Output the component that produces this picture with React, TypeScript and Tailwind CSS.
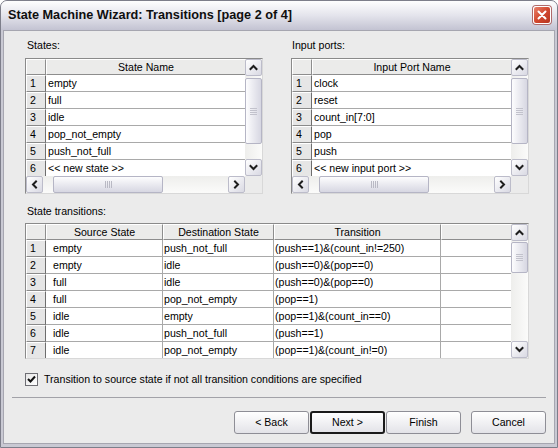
import React from "react";

type Dir = "up" | "down" | "left" | "right";

function Arrow({ dir }: { dir: Dir }) {
  const pts = {
    up: "1.5,6 4.5,3 7.5,6",
    down: "1.5,3 4.5,6 7.5,3",
    left: "6,1.5 3,4.5 6,7.5",
    right: "3,1.5 6,4.5 3,7.5",
  }[dir];
  return (
    <svg width="9" height="9" viewBox="0 0 9 9">
      <polyline points={pts} fill="none" stroke="#1e1e1e" strokeWidth="2" strokeLinecap="square" />
    </svg>
  );
}

function SBtn({ dir }: { dir: Dir }) {
  return (
    <div className="w-[17px] h-[17px] shrink-0 flex items-center justify-center rounded-[2px] border border-[#bcbcca] bg-gradient-to-br from-[#ffffff] to-[#d9d9e3]">
      <Arrow dir={dir} />
    </div>
  );
}

function VScroll({ thumb }: { thumb: string }) {
  return (
    <div className="w-[17px] shrink-0 flex flex-col bg-[#f4f4f2]">
      <SBtn dir="up" />
      <div className="flex-1 flex flex-col bg-gradient-to-r from-[#eeeeec] to-[#fbfbfa]">
        <div
          className={
            "rounded-[2px] border border-[#b5b5c5] bg-gradient-to-r from-[#fdfdfe] to-[#d7d7e2] flex flex-col items-center justify-center gap-[1px] " +
            thumb
          }
        >
          <div className="w-[7px] h-[1px] bg-[#c2c2cc]" />
          <div className="w-[7px] h-[1px] bg-[#c2c2cc]" />
          <div className="w-[7px] h-[1px] bg-[#c2c2cc]" />
          <div className="w-[7px] h-[1px] bg-[#c2c2cc]" />
        </div>
      </div>
      <SBtn dir="down" />
    </div>
  );
}

function HScroll() {
  return (
    <div className="h-[17px] flex flex-1 bg-[#f4f4f2]">
      <SBtn dir="left" />
      <div className="flex-1 flex bg-gradient-to-b from-[#eeeeec] to-[#fbfbfa]">
        <div className="ml-[10px] w-[110px] h-full rounded-[2px] border border-[#b5b5c5] bg-gradient-to-b from-[#fdfdfe] to-[#d7d7e2] flex items-center justify-center gap-[1px]">
          <div className="w-[1px] h-[7px] bg-[#b9b9c4]" />
          <div className="w-[1px] h-[7px] bg-[#b9b9c4]" />
          <div className="w-[1px] h-[7px] bg-[#b9b9c4]" />
          <div className="w-[1px] h-[7px] bg-[#b9b9c4]" />
        </div>
      </div>
      <SBtn dir="right" />
    </div>
  );
}

function HeadCell({ w, children, last }: { w: string; children?: React.ReactNode; last?: boolean }) {
  return (
    <div
      className={
        "h-full shrink-0 flex items-center justify-center bg-[#ebebea] border-b border-[#8d8d8d] border-t border-t-[#ffffff] border-l border-l-[#ffffff] " +
        (last ? "flex-1 " : "border-r border-r-[#8d8d8d] ") +
        w
      }
    >
      {children}
    </div>
  );
}

function NumCell({ n }: { n: number }) {
  return (
    <div className="w-[20px] shrink-0 h-full pl-[3px] flex items-center bg-[#e6e6e6] border-r border-r-[#6e6e6e] border-b border-b-[#8a8a8a] border-t border-t-[#ffffff] border-l border-l-[#ffffff]">
      {n}
    </div>
  );
}

function Cell({ w, children, pad, last }: { w: string; children?: React.ReactNode; pad: string; last?: boolean }) {
  return (
    <div
      className={
        "h-full shrink-0 flex items-center bg-white border-b border-[#a9a9a9] whitespace-nowrap overflow-hidden " +
        (last ? "flex-1 " : "border-r ") +
        pad +
        " " +
        w
      }
    >
      {children}
    </div>
  );
}

function ListTable({ header, rows }: { header: string; rows: string[] }) {
  return (
    <div className="w-[238px] h-[136px] border border-[#8a8a8a] border-r-[#d8d8d8] border-b-[#d8d8d8] flex flex-col bg-white">
      <div className="flex h-[117px] overflow-hidden">
        <div className="flex-1 flex flex-col overflow-hidden">
          <div className="h-[16px] flex shrink-0">
            <HeadCell w="w-[20px]" />
            <HeadCell w="" last>
              {header}
            </HeadCell>
          </div>
          {rows.map((r, i) => (
            <div key={i} className="h-[17px] flex shrink-0">
              <NumCell n={i + 1} />
              <Cell w="" pad="pl-[2px]" last>
                {r}
              </Cell>
            </div>
          ))}
        </div>
        <VScroll thumb="mt-[2px] h-[66px]" />
      </div>
      <div className="flex h-[17px]">
        <HScroll />
        <div className="w-[17px] bg-[#ebebeb]" />
      </div>
    </div>
  );
}

const transitions: [string, string, string][] = [
  ["empty", "push_not_full", "(push==1)&(count_in!=250)"],
  ["empty", "idle", "(push==0)&(pop==0)"],
  ["full", "idle", "(push==0)&(pop==0)"],
  ["full", "pop_not_empty", "(pop==1)"],
  ["idle", "empty", "(pop==1)&(count_in==0)"],
  ["idle", "push_not_full", "(push==1)"],
  ["idle", "pop_not_empty", "(pop==1)&(count_in!=0)"],
];

function TransTable() {
  return (
    <div className="w-[504px] h-[136px] border border-[#8a8a8a] border-r-[#d8d8d8] border-b-[#d8d8d8] flex bg-white">
      <div className="flex-1 flex flex-col overflow-hidden">
        <div className="h-[16px] flex shrink-0">
          <HeadCell w="w-[20px]" />
          <HeadCell w="w-[117px]">Source State</HeadCell>
          <HeadCell w="w-[111px]">Destination State</HeadCell>
          <HeadCell w="w-[167px]">Transition</HeadCell>
          <HeadCell w="" last />
        </div>
        {transitions.map((t, i) => (
          <div key={i} className="h-[17px] flex shrink-0">
            <NumCell n={i + 1} />
            <Cell w="w-[117px]" pad="pl-[7px]">
              {t[0]}
            </Cell>
            <Cell w="w-[111px]" pad="pl-[1px]">
              {t[1]}
            </Cell>
            <Cell w="w-[167px]" pad="pl-[1px]">
              {t[2]}
            </Cell>
            <Cell w="" pad="" last />
          </div>
        ))}
      </div>
      <VScroll thumb="mt-[1px] h-[31px]" />
    </div>
  );
}

function Button({ children, def }: { children: React.ReactNode; def?: boolean }) {
  return (
    <div
      className={
        "w-[75px] h-[23px] flex items-center justify-center rounded-[3px] bg-gradient-to-b from-[#ffffff] to-[#e3e3e8] " +
        (def ? "border-2 border-[#1a1a1a]" : "border border-[#8e8e96]")
      }
    >
      {children}
    </div>
  );
}

export default function App() {
  return (
    <div className="w-[558px] h-[448px] flex flex-col bg-[#c9c9d3] border border-[#7d7e8a] rounded-t-[7px] overflow-hidden font-['Liberation_Sans',Arial,sans-serif] text-[10.6px] text-black leading-none">
      <div className="h-[29px] shrink-0 flex items-center justify-between pl-[7px] pr-[6px] bg-gradient-to-b from-[#fefefe] via-[#e4e4ec] to-[#c3c3d2]">
        <div className="font-bold text-[12.7px] text-[#0f0f0f]">
          State Machine Wizard: Transitions [page 2 of 4]
        </div>
        <div className="w-[18px] h-[18px] mt-[-1px] rounded-[3px] border border-[#ffffff] bg-gradient-to-br from-[#e8806a] via-[#d2472e] to-[#b73520] flex items-center justify-center shadow-[0_0_0_1px_#b06a6a]">
          <svg width="10" height="10" viewBox="0 0 10 10">
            <path d="M1.5 1.5 L8.5 8.5 M8.5 1.5 L1.5 8.5" stroke="#ffffff" strokeWidth="2" strokeLinecap="round" />
          </svg>
        </div>
      </div>
      <div className="flex-1 mx-[2px] mb-[3px] bg-[#ebebeb] border border-[#a6a6b0] flex flex-col">
        <div className="ml-[8px] mr-[8px] border-b border-[#a2a2a8] flex flex-col pl-[13px] pr-[13px]">
          <div className="flex gap-[28px] mt-[8px]">
            <div className="flex flex-col">
              <div className="h-[13px] pl-[2px] flex items-center">States:</div>
              <div className="mt-[6px]">
                <ListTable
                  header="State Name"
                  rows={["empty", "full", "idle", "pop_not_empty", "push_not_full", "<< new state >>"]}
                />
              </div>
            </div>
            <div className="flex flex-col">
              <div className="h-[13px] pl-[1px] flex items-center">Input ports:</div>
              <div className="mt-[6px]">
                <ListTable
                  header="Input Port Name"
                  rows={["clock", "reset", "count_in[7:0]", "pop", "push", "<< new input port >>"]}
                />
              </div>
            </div>
          </div>
          <div className="h-[13px] pl-[2px] mt-[11px] flex items-center">State transitions:</div>
          <div className="mt-[5px]">
            <TransTable />
          </div>
          <div className="flex items-center mt-[14px] mb-[11px] h-[13px]">
            <div className="w-[13px] h-[13px] border border-[#6e6e74] bg-gradient-to-br from-[#e6e6e6] to-[#ffffff] flex items-center justify-center">
              <svg width="9" height="9" viewBox="0 0 9 9">
                <polyline points="1,4 3.5,6.5 8,1.5" fill="none" stroke="#111" strokeWidth="2" />
              </svg>
            </div>
            <div className="ml-[6px]">Transition to source state if not all transition conditions are specified</div>
          </div>
        </div>
        <div className="flex justify-end mr-[8px] mt-[13px] gap-[1px]">
          <Button>&lt; Back</Button>
          <Button def>Next &gt;</Button>
          <Button>Finish</Button>
          <div className="w-[8px]" />
          <Button>Cancel</Button>
        </div>
      </div>
    </div>
  );
}
